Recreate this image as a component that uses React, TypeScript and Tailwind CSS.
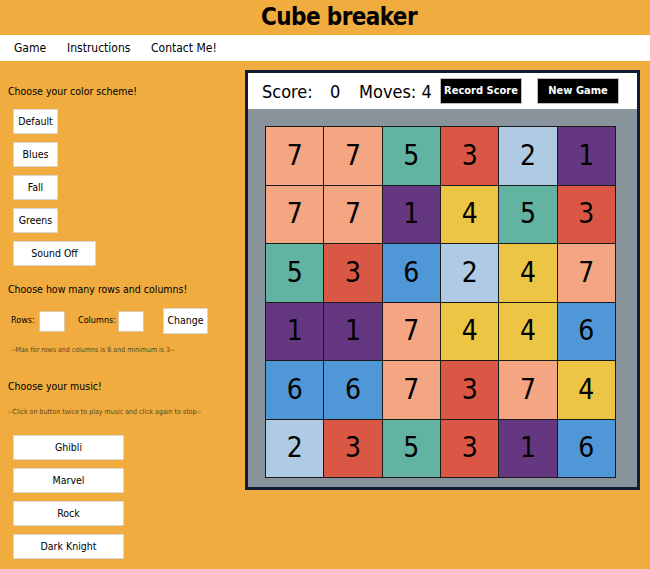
const colors: Record<number, string> = {
  1: 'bg-[#653780]',
  2: 'bg-[#aecbe3]',
  3: 'bg-[#d95744]',
  4: 'bg-[#ecc544]',
  5: 'bg-[#62b3a1]',
  6: 'bg-[#4f97d6]',
  7: 'bg-[#f4a582]',
};

const board = [
  [7, 7, 5, 3, 2, 1],
  [7, 7, 1, 4, 5, 3],
  [5, 3, 6, 2, 4, 7],
  [1, 1, 7, 4, 4, 6],
  [6, 6, 7, 3, 7, 4],
  [2, 3, 5, 3, 1, 6],
];

const SmallButton = ({ label, wide }: { label: string; wide?: string }) => (
  <button
    className={`h-[25px] ${wide ?? 'w-[45px]'} bg-white border border-[#d6d6d6] text-[10.5px] text-black whitespace-nowrap`}
  >
    {label}
  </button>
);

const App = () => {
  return (
    <div className="min-h-[569px] w-[650px] bg-[#f0ac3f] font-['DejaVu_Sans_Condensed','DejaVu_Sans',sans-serif] text-black overflow-hidden">
      <h1 className="h-[35px] pl-7 text-center text-[24px] leading-[35px] font-bold tracking-tight">Cube breaker</h1>

      <nav className="h-[26px] bg-white flex items-center text-[12px] whitespace-nowrap">
        <span className="ml-[14px] w-[53px]">Game</span>
        <span className="w-[84px]">Instructions</span>
        <span>Contact Me!</span>
      </nav>

      <div className="flex">
        {/* Options */}
        <div className="w-[245px] pl-2 pt-[22px] whitespace-nowrap">
          <p className="text-[10.5px] leading-[16px]">Choose your color scheme!</p>
          <div className="mt-[10px] pl-[5px] flex flex-col items-start gap-2">
            <SmallButton label="Default" />
            <SmallButton label="Blues" />
            <SmallButton label="Fall" />
            <SmallButton label="Greens" />
            <SmallButton label="Sound Off" wide="w-[83px]" />
          </div>

          <p className="mt-[15px] text-[10.5px] leading-[16px]">Choose how many rows and columns!</p>
          <div className="mt-[11px] flex items-center text-[9px]">
            <span className="ml-[3px] w-[28px]">Rows:</span>
            <input className="w-[26px] h-[21px] bg-white border border-[#e0c9a0]" />
            <span className="ml-[13px] w-[40px]">Columns:</span>
            <input className="w-[26px] h-[21px] bg-white border border-[#e0c9a0]" />
            <button className="ml-[19px] w-[45px] h-[26px] bg-white border border-[#d6d6d6] text-[10.5px]">Change</button>
          </div>
          <p className="mt-[11px] ml-[3px] text-[7px] text-[#5a4420]">--Max for rows and columns is 6 and minimum is 3--</p>

          <p className="mt-[22px] text-[10.5px] leading-[16px]">Choose your music!</p>
          <p className="mt-[13px] text-[7px] text-[#5a4420]">--Click on button twice to play music and click again to stop--</p>
          <div className="mt-[18px] pl-[5px] flex flex-col items-start gap-2">
            <SmallButton label="Ghibli" wide="w-[111px]" />
            <SmallButton label="Marvel" wide="w-[111px]" />
            <SmallButton label="Rock" wide="w-[111px]" />
            <SmallButton label="Dark Knight" wide="w-[111px]" />
          </div>
        </div>

        {/* Game board */}
        <div className="mt-[9px] w-[395px] h-[420px] border-[3px] border-[#0f1d35] bg-[#89939b] flex flex-col">
          <div className="h-[36px] bg-white flex items-center text-[18px] whitespace-nowrap">
            <span className="ml-[14px] w-[68px]">Score:</span>
            <span className="w-[29px]">0</span>
            <span className="w-[81px]">Moves: 4</span>
            <button className="w-[82px] h-[26px] bg-black border border-[#bbbbbb] text-white text-[11px] font-bold">
              Record Score
            </button>
            <button className="ml-[15px] w-[82px] h-[26px] bg-black border border-[#bbbbbb] text-white text-[11px] font-bold">
              New Game
            </button>
          </div>
          <div className="pl-[17px] pt-[17px]">
            <div className="w-[351px] grid grid-cols-6 gap-px bg-[#1a1a1a] p-px">
              {board.flat().map((n, i) => (
                <div
                  key={i}
                  className={`${colors[n]} h-[57.5px] flex items-center justify-center text-[28px]`}
                >
                  {n}
                </div>
              ))}
            </div>
          </div>
        </div>
      </div>
    </div>
  );
};

export default App;
